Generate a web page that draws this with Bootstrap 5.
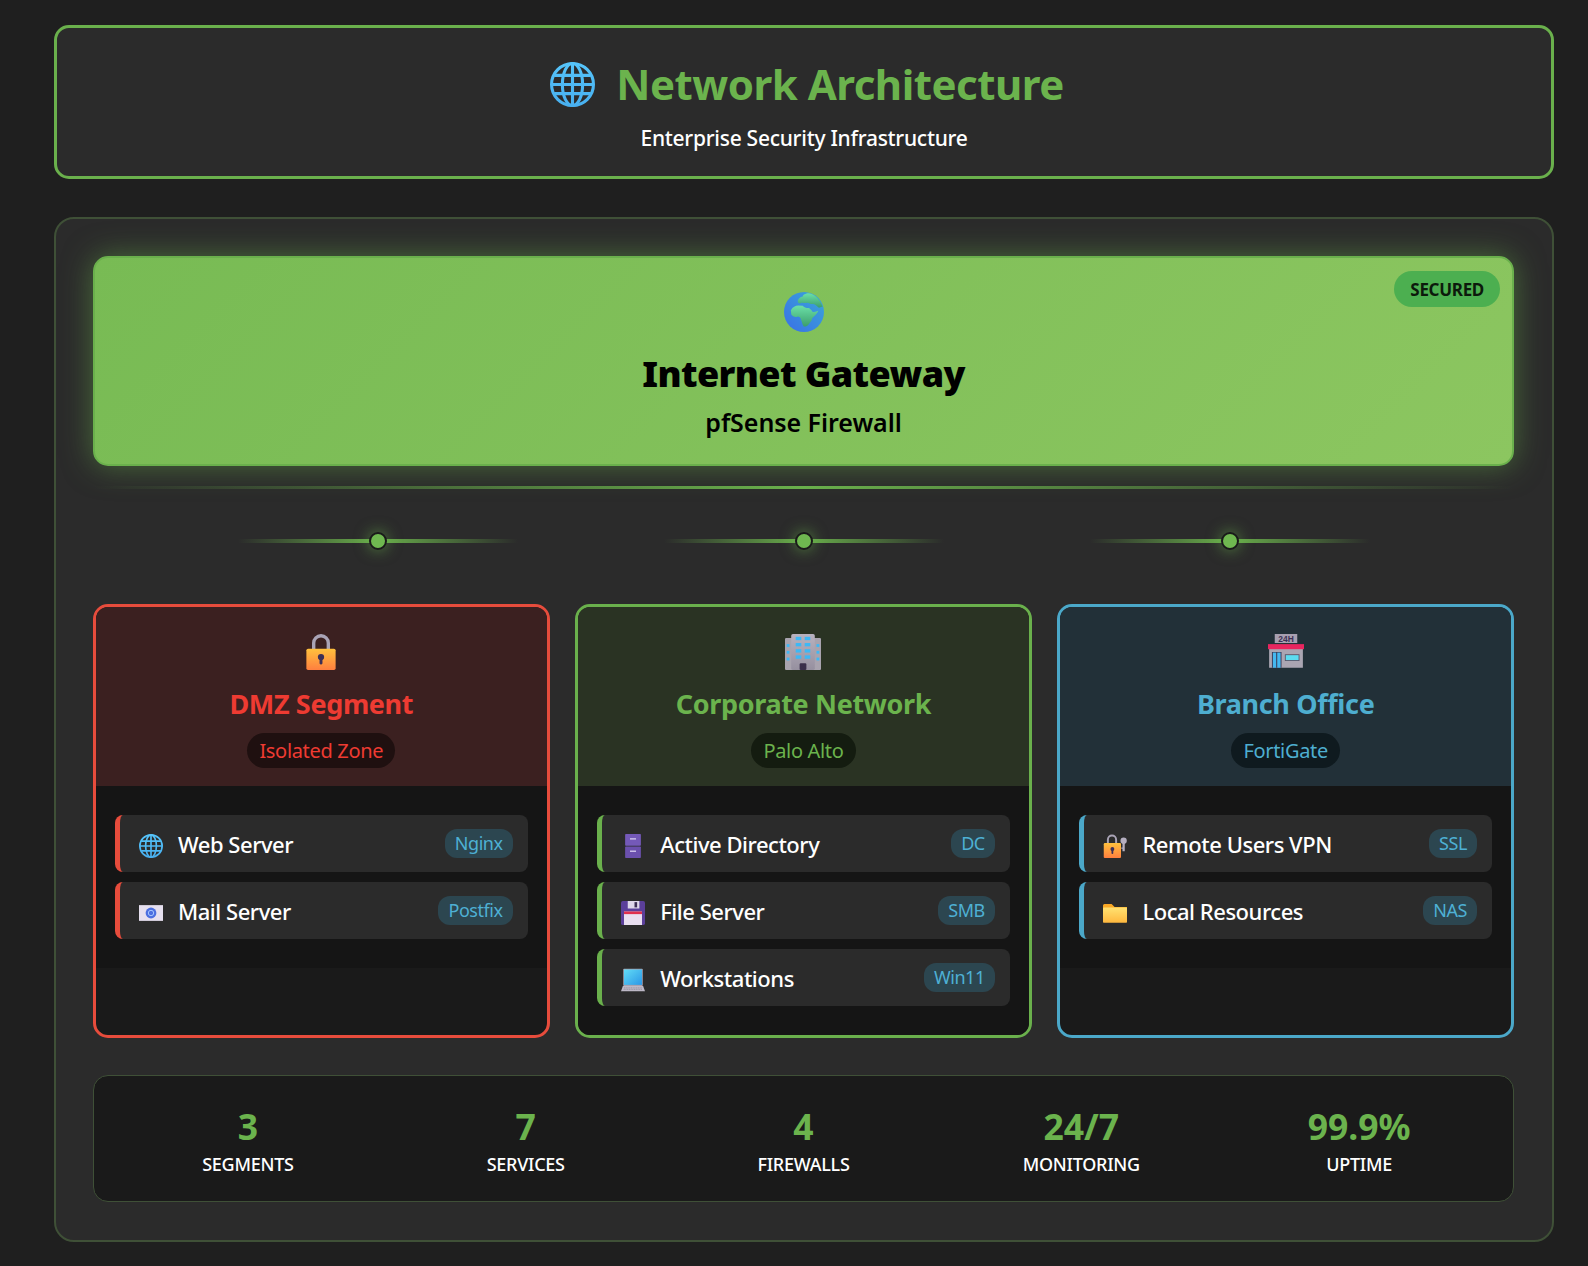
<!DOCTYPE html>
<html lang="en">
<head>
    <meta charset="UTF-8">
    <meta name="viewport" content="width=device-width, initial-scale=1.0">
    <title>Network Architecture</title>
    <link href="https://cdn.jsdelivr.net/npm/bootstrap@5.3.0/dist/css/bootstrap.min.css" rel="stylesheet">
    <style>
        body {
            background-color: #1f1f1f;
            color: #fff;
            font-family: "Noto Sans", "Open Sans", sans-serif;
            padding: 25px 34px 24px 54px;
        }
        .icon-defs { display: block; width: 0; height: 0; overflow: hidden; }
        .page-head {
            background-color: #2b2b2b;
            border: 3px solid #6ab04c;
            border-radius: 15px;
            height: 154px;
            padding-top: 28px;
            margin-bottom: 38px;
        }
        .page-title {
            color: #6bb34d;
            font-size: 42px;
            font-weight: 700;
            line-height: 56px;
            margin-bottom: 12px;
            padding-left: 6px;
            letter-spacing: -.5px;
        }
        .page-title svg { width: 45px; height: 45px; margin-right: 21px; }
        .page-sub { font-size: 21px; font-weight: 500; line-height: 28px; letter-spacing: -.27px; }
        .arch-panel {
            background-color: #2b2b2b;
            border: 2px solid #3f5037;
            border-radius: 20px;
            padding: 37px 38px 38px 37px;
        }
        .gateway {
            background: linear-gradient(135deg, #78bb54, #8cc660);
            border: 2px solid #6ab04c;
            border-radius: 15px;
            box-shadow: 0 0 30px rgba(106, 176, 76, .5);
            color: #000;
            height: 210px;
            padding-top: 34px;
        }
        .gateway-globe { width: 40px; height: 40px; display: block; margin: 0 auto 19px; }
        .gateway-title { font-size: 36px; font-weight: 900; line-height: 46px; margin-bottom: 9px; letter-spacing: -.6px; }
        .gateway-sub { font-size: 25px; font-weight: 600; line-height: 32px; letter-spacing: -.05px; }
        .secured-tag {
            top: 13px;
            right: 12px;
            background-color: #4caf50;
            color: #0c1a0c;
            font-size: 17px;
            font-weight: 700;
            line-height: 36px;
            padding: 1px 16px 0;
            height: 36px;
            letter-spacing: -.3px;
        }
        .trunk-line {
            height: 3px;
            margin-top: 20px;
            background: linear-gradient(90deg, transparent, #6ab04c 50%, transparent);
        }
        .link-row { height: 115px; padding-top: 50px; }
        .link-cell { width: 426px; }
        .link-line {
            width: 280px;
            height: 4px;
            background: linear-gradient(90deg, transparent, #6ab04c 50%, transparent);
        }
        .link-dot {
            top: -7px;
            left: 50%;
            margin-left: -9px;
            width: 18px;
            height: 18px;
            border: 2px solid #1a1a1a;
            border-radius: 50%;
            background-color: #6fb850;
            box-shadow: 0 0 15px rgba(106, 176, 76, .7);
        }
        .seg-row { --bs-gutter-x: 25.6px; margin-bottom: 37px; }
        .seg-card {
            --accent: #6ab04c;
            background-color: #1a1a1a;
            border: 3px solid var(--accent);
            border-radius: 15px;
            overflow: hidden;
            height: 434px;
        }
        .seg-red { --accent: #e74c3c; --title: #ee3b32; --tint: #3b2020; --pill: #1f1010; }
        .seg-green { --accent: #6ab04c; --title: #6bb34d; --tint: #2a3323; --pill: #141c10; }
        .seg-blue { --accent: #4ba8c9; --title: #4eaed0; --tint: #223038; --pill: #0f1a1f; }
        .seg-top {
            background-color: var(--tint);
            height: 179px;
            padding-top: 27px;
        }
        .seg-icon { width: 36px; height: 36px; display: block; margin: 0 auto 15px; }
        .seg-title {
            color: var(--title);
            font-size: 27px;
            font-weight: 700;
            line-height: 38px;
            margin-bottom: 10px;
            letter-spacing: -.35px;
        }
        .seg-pill {
            background-color: var(--pill);
            color: var(--title);
            font-size: 20px;
            line-height: 34px;
            padding: 1px 12px 0;
            letter-spacing: -.33px;
        }
        .seg-body { background-color: #151515; padding: 29px 19px; }
        .svc-item {
            background-color: #2b2b2b;
            border-left: 5px solid var(--accent);
            border-radius: 8px;
            height: 57px;
            padding: 0 15px 0 16px;
        }
        .svc-item + .svc-item { margin-top: 10px; }
        .svc-icon { width: 30px; flex: 0 0 30px; margin-right: 12px; }
        .svc-icon svg { width: 24px; height: 24px; display: block; margin: 4px auto 0; }
        .svc-name { font-size: 22px; font-weight: 500; padding-top: 1px; letter-spacing: -.47px; }
        .svc-tag {
            background-color: #2c4650;
            color: #4eb0d4;
            border-radius: 12px;
            font-size: 18px;
            line-height: 29px;
            padding: 0 10px;
            letter-spacing: -.45px;
        }
        .stat-box {
            background-color: #1a1a1a;
            border: 1px solid #3f5037;
            border-radius: 15px;
            height: 127px;
            padding: 26px 15px 0;
        }
        .stat-num { color: #6bb34d; font-size: 35.5px; font-weight: 700; line-height: 48px; margin-bottom: 1px; }
        .stat-label { font-size: 18px; font-weight: 500; line-height: 26px; letter-spacing: -.25px; }
    </style>
</head>
<body>
    <svg class="icon-defs" xmlns="http://www.w3.org/2000/svg" aria-hidden="true">
        <defs>
            <linearGradient id="gBlue" x1="0" y1="0" x2="0" y2="1"><stop offset="0" stop-color="#55c4fa"/><stop offset="1" stop-color="#48b0f0"/></linearGradient>
            <linearGradient id="gOrange" x1="0" y1="0" x2="0" y2="1"><stop offset="0" stop-color="#ffc13d"/><stop offset="1" stop-color="#ff7f3f"/></linearGradient>
            <linearGradient id="gSea" x1="0" y1="1" x2="1" y2="0"><stop offset="0" stop-color="#3a6fe6"/><stop offset="1" stop-color="#3aa8d8"/></linearGradient>
            <linearGradient id="gLand" x1="0" y1="0" x2="0" y2="1"><stop offset="0" stop-color="#6be0a8"/><stop offset="1" stop-color="#3c9e6c"/></linearGradient>
            <linearGradient id="gScreen" x1="0" y1="0" x2="1" y2="1"><stop offset="0" stop-color="#62dcf6"/><stop offset="1" stop-color="#2b97e6"/></linearGradient>
            <linearGradient id="gFolder" x1="0" y1="0" x2="0" y2="1"><stop offset="0" stop-color="#ffe272"/><stop offset="1" stop-color="#ffb83e"/></linearGradient>
            <linearGradient id="gTower" x1="0" y1="0" x2="0" y2="1"><stop offset="0" stop-color="#b8b2bf"/><stop offset="1" stop-color="#96909f"/></linearGradient>
        </defs>
        <symbol id="ic-globe" viewBox="0 0 32 32">
            <g fill="none" stroke="url(#gBlue)" stroke-width="2.2">
                <circle cx="16" cy="16" r="14.9"/>
                <ellipse cx="16" cy="16" rx="7.2" ry="14.9"/>
                <path d="M16 1v30M3 9.5h26M1 16h30M3 22.5h26"/>
            </g>
        </symbol>
        <symbol id="ic-earth" viewBox="0 0 32 32">
            <circle cx="16" cy="16" r="16" fill="url(#gSea)"/>
            <path fill="url(#gLand)" d="M5.5 14.500C7 12 9 10.800 11.500 10.800L15 11C16 12.500 18.500 13 20 12.800L22 14.500C23 17 25.500 15.500 27.500 15 26.500 17.500 24 19.500 22.500 21 22.500 23 21 24 20 25.500 18.500 27.500 17 28 15.800 27.500 14.500 26 14.500 24 13.500 22 13.500 20.500 12 19.500 11 19.500 9 20.500 7 19.500 5.800 18Z"/>
            <path fill="url(#gLand)" d="M11 7C11.500 5 13 4 15 3.500 15 2.500 17 1 20 1 23 1.500 26 3.500 28.500 7L31 11.500 28 12.500C26.500 11.500 25 9.500 23.500 9.500 21 10 20.500 8.500 18.500 8.500 16 9.500 15 8 13.500 9 12 9.500 11 8.500 11 7Z"/>
        </symbol>
        <symbol id="ic-lock" viewBox="0 0 32 32">
            <path d="M9.5 15V8a6.5 6.500 0 0 1 13 0v7" fill="none" stroke="#a9a3b5" stroke-width="3"/>
            <rect x="3" y="13" width="26" height="19" rx="1.5" fill="url(#gOrange)"/>
            <circle cx="16" cy="20.5" r="2.8" fill="#3d2f55"/>
            <rect x="14.7" y="21" width="2.6" height="6" rx="1" fill="#3d2f55"/>
        </symbol>
        <symbol id="ic-tower" viewBox="0 0 32 32">
            <rect x="0" y="3.5" width="32" height="28.5" rx="1" fill="#a8a3ae"/>
            <rect x="5.5" y="0" width="21" height="32" rx="1.5" fill="url(#gTower)"/>
            <g fill="#3db8f5">
                <rect x="9.5" y="2.5" width="5" height="3"/><rect x="17.5" y="2.5" width="5" height="3"/>
                <rect x="9.5" y="8" width="5" height="3"/><rect x="17.5" y="8" width="5" height="3"/>
                <rect x="9.5" y="13.5" width="5" height="3"/><rect x="17.5" y="13.5" width="5" height="3"/>
                <rect x="9.5" y="19" width="5" height="3"/><rect x="17.5" y="19" width="5" height="3"/>
                <rect x="1.5" y="9" width="2.5" height="2.5"/><rect x="28" y="9" width="2.5" height="2.5"/>
                <rect x="1.5" y="15" width="2.5" height="2.5"/><rect x="28" y="15" width="2.5" height="2.5"/>
                <rect x="1.5" y="21" width="2.5" height="2.5"/><rect x="28" y="21" width="2.5" height="2.5"/>
            </g>
            <rect x="13" y="26" width="6" height="6" rx="1" fill="#3a2f4a"/>
        </symbol>
        <symbol id="ic-mail" viewBox="0 0 32 32">
            <rect x="0" y="5.5" width="32" height="21" fill="#e6e0ef"/>
            <circle cx="16" cy="16" r="7.2" fill="#4c6fe0"/>
            <circle cx="16" cy="16" r="3.6" fill="none" stroke="#a8c6ff" stroke-width="1.3"/>
        </symbol>
        <symbol id="ic-cabinet" viewBox="0 0 32 32">
            <rect x="5.5" y="0" width="21" height="15.5" rx="1" fill="#7459b8"/>
            <rect x="5.5" y="16.5" width="21" height="15.5" rx="1" fill="#6b50ad"/>
            <rect x="12" y="5.5" width="8" height="2" fill="#c9bde8"/>
            <rect x="12" y="22" width="8" height="2" fill="#c9bde8"/>
        </symbol>
        <symbol id="ic-floppy" viewBox="0 0 32 32">
            <rect x="0" y="0" width="32" height="32" rx="2.5" fill="#5b3f9a"/>
            <rect x="9" y="0" width="15.5" height="10" fill="#ded7ea"/>
            <rect x="18" y="1.5" width="3.5" height="7" fill="#3d2f55"/>
            <rect x="4" y="14" width="24" height="18" fill="#e9dff0"/>
            <rect x="4" y="14" width="24" height="3.5" fill="#e0304e"/>
        </symbol>
        <symbol id="ic-laptop" viewBox="0 0 32 32">
            <rect x="3" y="1" width="26" height="23" rx="1" fill="#a8a2b0"/>
            <rect x="4" y="2" width="24" height="20.5" fill="url(#gScreen)"/>
            <path d="M2.5 24h27L32 31H0Z" fill="#bdb8c6"/>
            <path d="M4 26.500h24M3.500 28.500h25" stroke="#8f8a99" stroke-width="1" stroke-dasharray="1.5 .8"/>
        </symbol>
        <symbol id="ic-keylock" viewBox="0 0 32 32">
            <path d="M6.5 14V7.500a5.500 5.500 0 0 1 11 0V14" fill="none" stroke="#a9a3b5" stroke-width="2.6"/>
            <rect x="1" y="12" width="23" height="20" rx="1.5" fill="url(#gOrange)"/>
            <circle cx="12.5" cy="20" r="2.6" fill="#3d2f55"/>
            <rect x="11.3" y="20.5" width="2.4" height="6" rx="1" fill="#3d2f55"/>
            <circle cx="27.5" cy="9" r="4.2" fill="#b5afc0"/>
            <rect x="26" y="12" width="3" height="11" fill="#b5afc0"/>
            <rect x="24.5" y="18" width="2" height="1.8" fill="#b5afc0"/>
        </symbol>
        <symbol id="ic-folder" viewBox="0 0 32 32">
            <path d="M0 6a2 2 0 0 1 2-2h9.500l4 4H32v6H0Z" fill="#f9a825"/>
            <rect x="0" y="8.5" width="32" height="20.5" rx="1" fill="url(#gFolder)"/>
        </symbol>
    </svg>

    <div class="page-head text-center">
        <h1 class="page-title d-flex align-items-center justify-content-center">
            <svg><use href="#ic-globe"/></svg>Network Architecture
        </h1>
        <p class="page-sub mb-0">Enterprise Security Infrastructure</p>
    </div>

    <div class="arch-panel">
        <div class="gateway position-relative text-center">
            <span class="secured-tag position-absolute rounded-pill">SECURED</span>
            <svg class="gateway-globe"><use href="#ic-earth"/></svg>
            <h2 class="gateway-title">Internet Gateway</h2>
            <p class="gateway-sub mb-0">pfSense Firewall</p>
        </div>
        <div class="trunk-line"></div>

        <div class="link-row d-flex justify-content-center">
            <div class="link-cell d-flex justify-content-center"><div class="link-line position-relative"><span class="link-dot position-absolute"></span></div></div>
            <div class="link-cell d-flex justify-content-center"><div class="link-line position-relative"><span class="link-dot position-absolute"></span></div></div>
            <div class="link-cell d-flex justify-content-center"><div class="link-line position-relative"><span class="link-dot position-absolute"></span></div></div>
        </div>

        <div class="row seg-row">
            <div class="col-4">
                <div class="seg-card seg-red">
                    <div class="seg-top text-center">
                        <svg class="seg-icon"><use href="#ic-lock"/></svg>
                        <h3 class="seg-title">DMZ Segment</h3>
                        <span class="seg-pill d-inline-block rounded-pill">Isolated Zone</span>
                    </div>
                    <div class="seg-body">
                        <div class="svc-item d-flex align-items-center">
                            <span class="svc-icon"><svg><use href="#ic-globe"/></svg></span>
                            <span class="svc-name flex-grow-1">Web Server</span>
                            <span class="svc-tag">Nginx</span>
                        </div>
                        <div class="svc-item d-flex align-items-center">
                            <span class="svc-icon"><svg><use href="#ic-mail"/></svg></span>
                            <span class="svc-name flex-grow-1">Mail Server</span>
                            <span class="svc-tag">Postfix</span>
                        </div>
                    </div>
                </div>
            </div>
            <div class="col-4">
                <div class="seg-card seg-green">
                    <div class="seg-top text-center">
                        <svg class="seg-icon"><use href="#ic-tower"/></svg>
                        <h3 class="seg-title">Corporate Network</h3>
                        <span class="seg-pill d-inline-block rounded-pill">Palo Alto</span>
                    </div>
                    <div class="seg-body">
                        <div class="svc-item d-flex align-items-center">
                            <span class="svc-icon"><svg><use href="#ic-cabinet"/></svg></span>
                            <span class="svc-name flex-grow-1">Active Directory</span>
                            <span class="svc-tag">DC</span>
                        </div>
                        <div class="svc-item d-flex align-items-center">
                            <span class="svc-icon"><svg><use href="#ic-floppy"/></svg></span>
                            <span class="svc-name flex-grow-1">File Server</span>
                            <span class="svc-tag">SMB</span>
                        </div>
                        <div class="svc-item d-flex align-items-center">
                            <span class="svc-icon"><svg><use href="#ic-laptop"/></svg></span>
                            <span class="svc-name flex-grow-1">Workstations</span>
                            <span class="svc-tag">Win11</span>
                        </div>
                    </div>
                </div>
            </div>
            <div class="col-4">
                <div class="seg-card seg-blue">
                    <div class="seg-top text-center">
                        <svg class="seg-icon" viewBox="0 0 32 32">
                            <rect x="6" y="0" width="20" height="8" fill="#a79fb0"/>
                            <text x="16" y="6.8" text-anchor="middle" font-family="Liberation Sans, sans-serif" font-size="7.5" font-weight="700" fill="#3d2f55">24H</text>
                            <rect x="1" y="13" width="30" height="17" fill="#aaa5b2"/>
                            <rect x="0" y="9" width="32" height="4.5" fill="#e9255f"/>
                            <rect x="3.5" y="16" width="8.5" height="14" fill="#3a3550"/>
                            <rect x="4.3" y="16.5" width="3" height="13.5" fill="#45b8f0"/>
                            <rect x="8.2" y="16.5" width="3" height="13.5" fill="#45b8f0"/>
                            <rect x="15" y="18" width="13" height="6" fill="#5a566a"/>
                            <rect x="15.8" y="18.8" width="11.4" height="4.4" fill="#5cdcf0"/>
                        </svg>
                        <h3 class="seg-title">Branch Office</h3>
                        <span class="seg-pill d-inline-block rounded-pill">FortiGate</span>
                    </div>
                    <div class="seg-body">
                        <div class="svc-item d-flex align-items-center">
                            <span class="svc-icon"><svg><use href="#ic-keylock"/></svg></span>
                            <span class="svc-name flex-grow-1">Remote Users VPN</span>
                            <span class="svc-tag">SSL</span>
                        </div>
                        <div class="svc-item d-flex align-items-center">
                            <span class="svc-icon"><svg><use href="#ic-folder"/></svg></span>
                            <span class="svc-name flex-grow-1">Local Resources</span>
                            <span class="svc-tag">NAS</span>
                        </div>
                    </div>
                </div>
            </div>
        </div>

        <div class="stat-box row g-0 text-center">
            <div class="col"><div class="stat-num">3</div><div class="stat-label text-uppercase">Segments</div></div>
            <div class="col"><div class="stat-num">7</div><div class="stat-label text-uppercase">Services</div></div>
            <div class="col"><div class="stat-num">4</div><div class="stat-label text-uppercase">Firewalls</div></div>
            <div class="col"><div class="stat-num">24/7</div><div class="stat-label text-uppercase">Monitoring</div></div>
            <div class="col"><div class="stat-num">99.9%</div><div class="stat-label text-uppercase">Uptime</div></div>
        </div>
    </div>

    <script src="https://cdn.jsdelivr.net/npm/bootstrap@5.3.0/dist/js/bootstrap.bundle.min.js"></script>
</body>
</html>
